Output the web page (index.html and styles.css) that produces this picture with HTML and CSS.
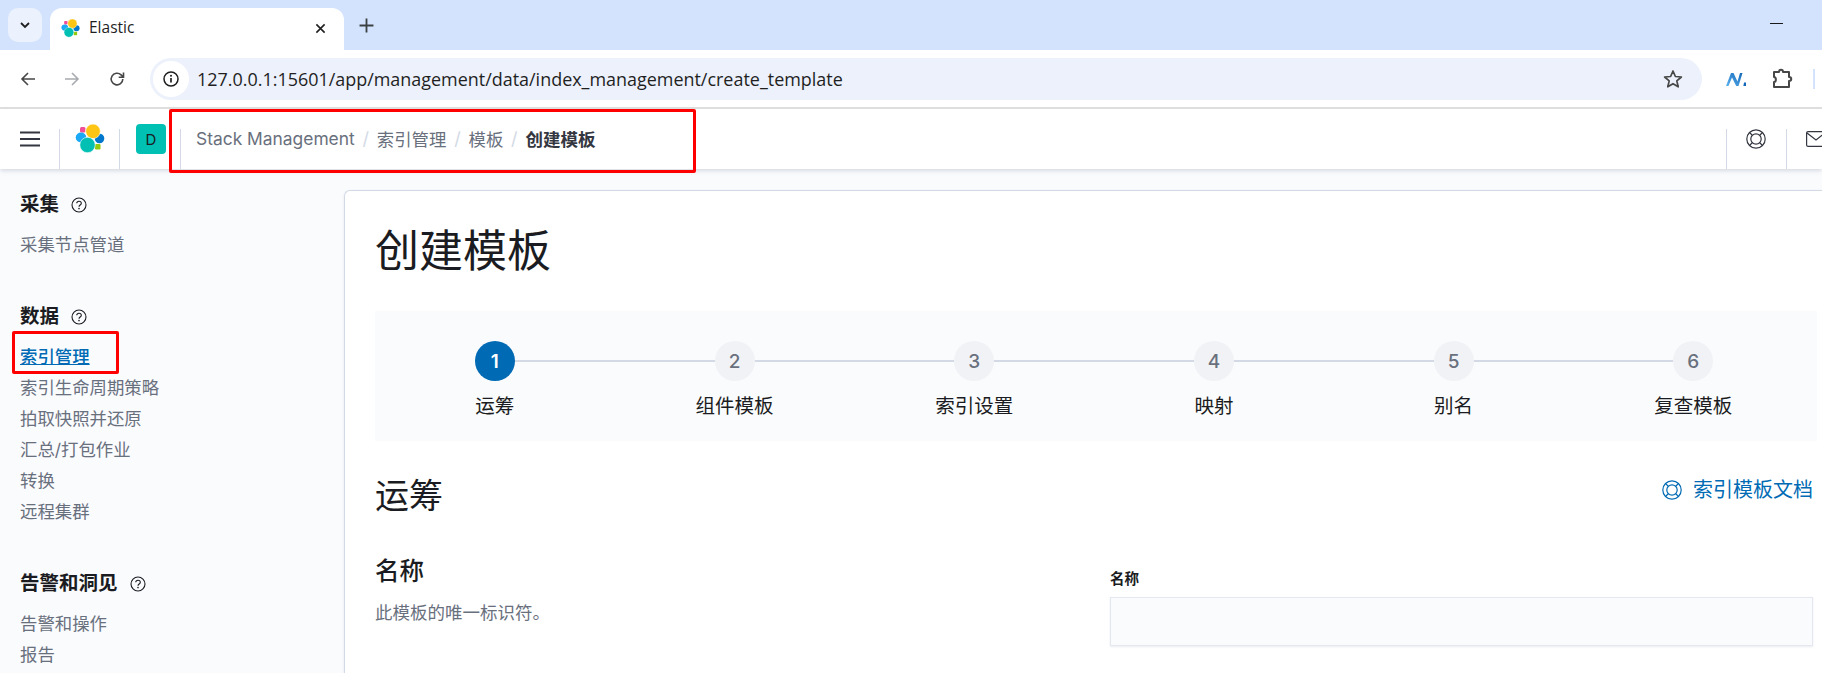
FILE: index.html
```html
<!DOCTYPE html>
<html lang="zh">
<head>
<meta charset="utf-8">
<title>Elastic</title>
<link rel="stylesheet" href="styles.css">
</head>
<body>
<svg class="defs" width="0" height="0" aria-hidden="true">
  <symbol id="elastic" viewBox="0 0 30 30">
    <rect x="5" y="3" width="5.500" height="5.500" rx="1.500" fill="#f04e98"/>
    <ellipse cx="6" cy="13.500" rx="5.300" ry="4.900" fill="#1ba9f5"/>
    <ellipse cx="24.500" cy="14.500" rx="4.800" ry="4.800" fill="#07c"/>
    <rect x="20" y="20" width="5.500" height="5.500" rx="1.200" fill="#93c90e"/>
    <circle cx="18" cy="7.300" r="7.300" fill="#fec514" stroke="#fff" stroke-width=".6"/>
    <circle cx="12.500" cy="21" r="7.700" fill="#00bfb3" stroke="#fff" stroke-width=".6"/>
  </symbol>
  <symbol id="buoy" viewBox="0 0 20 20">
    <g fill="none" stroke="currentColor" stroke-width="1.200">
      <circle cx="10" cy="10" r="9.200"/>
      <circle cx="10" cy="10" r="5.200"/>
      <path d="M3.500 3.500l3 3M16.500 3.500l-3 3M3.500 16.500l3-3M16.500 16.500l-3-3"/>
    </g>
  </symbol>
  <symbol id="help" viewBox="0 0 16 16">
    <circle cx="8" cy="8" r="7" fill="none" stroke="currentColor" stroke-width="1.100"/>
    <path d="M5.700 6.300C5.800 4.900 6.800 4.200 8 4.200c1.300 0 2.300.8 2.300 2 0 1.800-2.300 1.800-2.300 3.600" fill="none" stroke="currentColor" stroke-width="1.100"/>
    <circle cx="8" cy="11.600" r=".8" fill="currentColor"/>
  </symbol>
</svg>

<div class="tabstrip">
  <div class="tab-menu">
    <svg class="ic12" viewBox="0 0 12 12"><path d="M2 4l4 4 4-4" fill="none" stroke="#1f1f1f" stroke-width="1.800"/></svg>
  </div>
  <div class="tab">
    <svg class="tab-logo"><use href="#elastic"/></svg>
    <span class="tab-title">Elastic</span>
    <svg class="tab-close" viewBox="0 0 12 12"><path d="M1.500 1.500l9 9M10.500 1.500l-9 9" stroke="#1f1f1f" stroke-width="1.700"/></svg>
  </div>
  <svg class="tab-new" viewBox="0 0 14 14"><path d="M7 .5v13M.5 7h13" stroke="#3c4043" stroke-width="1.700"/></svg>
  <div class="win-min"></div>
</div>

<div class="toolbar">
  <svg class="nav-ic" viewBox="0 0 16 16"><path d="M15 8H2M8 2L2 8l6 6" fill="none" stroke="#474747" stroke-width="1.600"/></svg>
  <svg class="nav-ic" viewBox="0 0 16 16"><path d="M1 8h13M8 2l6 6-6 6" fill="none" stroke="#a8abb0" stroke-width="1.600"/></svg>
  <svg class="nav-ic" viewBox="0 0 16 16"><path d="M13.800 8a5.800 5.800 0 1 1-1.700-4.100L14 5.800M14.500 1.500v4.800H9.700" fill="none" stroke="#474747" stroke-width="1.600"/></svg>
  <div class="omnibox">
    <span class="site-info">
      <svg viewBox="0 0 16 16" class="site-ic"><circle cx="8" cy="8" r="7" fill="none" stroke="#1f1f1f" stroke-width="1.500"/><path d="M8 7v4.500" stroke="#1f1f1f" stroke-width="1.700"/><circle cx="8" cy="4.800" r="1" fill="#1f1f1f"/></svg>
    </span>
    <span class="url">127.0.0.1:15601/app/management/data/index_management/create_template</span>
    <svg class="star" viewBox="0 0 20 20"><path d="M10 2l2.400 5.500 6 .5-4.600 3.900 1.400 5.900L10 14.700l-5.200 3.100 1.400-5.900L1.600 8l6-.5z" fill="none" stroke="#474747" stroke-width="1.700" stroke-linejoin="round"/></svg>
  </div>
  <svg class="ext-n" viewBox="0 0 22 16">
    <defs><linearGradient id="ng" x1="0" y1="1" x2="1" y2="0"><stop offset="0" stop-color="#5eb4f0"/><stop offset="1" stop-color="#1367b8"/></linearGradient></defs>
    <path d="M1 15L6 2h2.500l4 8.500L15 2h2.500L13.500 15h-2.300L7 6.500 3.500 15z" fill="url(#ng)"/>
    <path d="M19 11.500h2V15h-2.600z" fill="#1367b8"/>
  </svg>
  <svg class="ext-p" viewBox="0 0 22 22"><path d="M3 4h5c0-3 4-3 4 0h6v5c3 0 3 4 0 4v6H3v-5c2.500 0 2.500-5 0-5z" fill="none" stroke="#474747" stroke-width="2" stroke-linejoin="round"/></svg>
  <div class="profile-edge"></div>
</div>

<header class="kbn">
  <div class="kbn-cell cell-menu">
    <svg class="burger" viewBox="0 0 20 16"><path d="M0 1.500h20M0 8h20M0 14.500h20" stroke="#343741" stroke-width="2"/></svg>
  </div>
  <div class="kbn-cell cell-logo"><svg class="kbn-logo"><use href="#elastic"/></svg></div>
  <div class="kbn-cell cell-space"><span class="avatar">D</span></div>
  <nav class="crumbs">
    <span>Stack Management</span><i>/</i><span>索引管理</span><i>/</i><span>模板</span><i>/</i><b>创建模板</b>
  </nav>
  <div class="kbn-cell cell-help"><svg class="buoy"><use href="#buoy"/></svg></div>
  <div class="kbn-cell cell-mail">
    <svg class="mail" viewBox="0 0 20 16"><rect x=".6" y=".6" width="18.800" height="14.800" rx="1.500" fill="none" stroke="#343741" stroke-width="1.200"/><path d="M1 2l9 7 9-7" fill="none" stroke="#343741" stroke-width="1.200"/></svg>
  </div>
</header>

<div class="body">
  <aside class="side">
    <section class="group">
      <h4>采集<svg class="help"><use href="#help"/></svg></h4>
      <a>采集节点管道</a>
    </section>
    <section class="group">
      <h4>数据<svg class="help"><use href="#help"/></svg></h4>
      <a class="active">索引管理</a>
      <a>索引生命周期策略</a>
      <a>拍取快照并还原</a>
      <a>汇总/打包作业</a>
      <a>转换</a>
      <a>远程集群</a>
    </section>
    <section class="group">
      <h4>告警和洞见<svg class="help"><use href="#help"/></svg></h4>
      <a>告警和操作</a>
      <a>报告</a>
    </section>
  </aside>

  <main class="panel">
    <h1>创建模板</h1>
    <div class="steps">
      <div class="step current"><span class="num">1</span><span class="lbl">运筹</span></div>
      <div class="step"><span class="num">2</span><span class="lbl">组件模板</span></div>
      <div class="step"><span class="num">3</span><span class="lbl">索引设置</span></div>
      <div class="step"><span class="num">4</span><span class="lbl">映射</span></div>
      <div class="step"><span class="num">5</span><span class="lbl">别名</span></div>
      <div class="step"><span class="num">6</span><span class="lbl">复查模板</span></div>
    </div>
    <div class="sec-head">
      <h2>运筹</h2>
      <a class="doc"><svg class="doc-ic"><use href="#buoy"/></svg>索引模板文档</a>
    </div>
    <div class="form-row">
      <div class="form-desc">
        <h3>名称</h3>
        <p>此模板的唯一标识符。</p>
      </div>
      <div class="form-field">
        <label>名称</label>
        <div class="input"></div>
      </div>
    </div>
  </main>
</div>

<div class="mark mark-crumbs"></div>
<div class="mark mark-nav"></div>
</body>
</html>
```

FILE: styles.css
```css
* { box-sizing: border-box; }
html, body { margin: 0; height: 673px; overflow: hidden; background: #fff; }
body {
  position: relative;
  font-family: Inter, "Noto Sans CJK SC", sans-serif;
  color: #1a1c21;
}
.defs { position: absolute; }

/* browser chrome */
.tabstrip {
  height: 50px;
  background: #d3e3fd;
  display: flex;
  align-items: flex-end;
  position: relative;
}
.tab-menu {
  width: 34px;
  height: 34px;
  margin: 0 0 8px 8px;
  border-radius: 10px;
  background: #ebf1fd;
  display: flex;
  align-items: center;
  justify-content: center;
}
.ic12 { width: 12px; height: 12px; }
.tab {
  width: 294px;
  height: 42px;
  margin-left: 8px;
  background: #fff;
  border-radius: 12px 12px 0 0;
  display: flex;
  align-items: center;
  padding: 0 18px 2px 11px;
}
.tab-logo { width: 19px; height: 19px; }
.tab-title {
  font-family: "Open Sans", "Noto Sans", sans-serif;
  font-size: 15.500px;
  line-height: 20px;
  color: #1f1f1f;
  margin: 0 0 3px 9px;
  flex: 1;
}
.tab-close { width: 11px; height: 11px; }
.tab-new { width: 15px; height: 15px; margin: 0 0 17px 15px; }
.win-min {
  width: 13px;
  height: 1px;
  background: #1a1a1a;
  margin: 0 39px 26px auto;
}
.toolbar {
  height: 59px;
  background: #fff;
  border-bottom: 2px solid #e0e0e0;
  display: flex;
  align-items: center;
  padding: 0 0 0 20px;
  position: relative;
}
.nav-ic { width: 16px; height: 16px; margin-right: 28px; flex: none; }
.nav-ic:nth-child(3) { margin-left: 1px; margin-right: 25px; }
.omnibox {
  width: 1552px;
  height: 42px;
  border-radius: 21px;
  background: #ecf1fb;
  display: flex;
  align-items: center;
  padding: 0 19px 0 3px;
  flex: none;
}
.site-info {
  width: 36px;
  height: 36px;
  border-radius: 50%;
  background: #fff;
  display: flex;
  align-items: center;
  justify-content: center;
  flex: none;
}
.site-ic { width: 16px; height: 16px; }
.url {
  font-family: "Open Sans", "Noto Sans", sans-serif;
  font-size: 17.950px;
  color: #1f1f1f;
  margin-left: 8px;
  flex: 1;
  white-space: nowrap;
}
.star { width: 20px; height: 20px; flex: none; }
.ext-n { width: 22px; height: 16px; margin-left: 23px; flex: none; }
.ext-p { width: 22px; height: 22px; margin-left: 24px; flex: none; }
.profile-edge {
  width: 2px;
  height: 20px;
  background: #d3e3fd;
  margin-left: 20px;
  flex: none;
}

/* kibana header */
.kbn {
  height: 60px;
  background: #fff;
  display: flex;
  box-shadow: 0 2px 4px rgba(152, 162, 179, .35);
  position: relative;
  z-index: 2;
}
.kbn-cell {
  display: flex;
  justify-content: center;
  position: relative;
  flex: none;
  padding-top: 20px;
}
.kbn-cell::after {
  content: "";
  position: absolute;
  right: 0;
  top: 20px;
  bottom: 0;
  width: 1px;
  background: #d3dae6;
}
.cell-menu { width: 60px; }
.burger { width: 20px; height: 16px; margin-top: 2px; }
.cell-logo { width: 60px; padding-top: 15px; }
.kbn-logo { width: 30px; height: 30px; margin-left: -1px; }
.cell-space { width: 61px; padding-top: 15px; justify-content: flex-start; padding-left: 16px; }
.avatar {
  width: 30px;
  height: 30px;
  border-radius: 4px;
  background: #00bfb3;
  color: #1a1c21;
  font-size: 15px;
  display: flex;
  align-items: center;
  justify-content: center;
}
.crumbs {
  flex: 1;
  display: flex;
  align-items: center;
  height: 60px;
  padding: 0 0 2px 15px;
  font-size: 17.400px;
  color: #69707d;
  white-space: nowrap;
}
.crumbs i {
  font-style: normal;
  color: #d3dae6;
  margin: 0 7.800px;
  font-size: 18px;
}
.crumbs b { color: #343741; font-weight: 600; font-size: 17.500px; }
.cell-help { width: 60px; padding-top: 20px; }
.cell-help::after { left: 0; right: auto; }
.cell-mail { width: 36px; justify-content: flex-start; padding: 22px 0 0 20px; overflow: hidden; }
.cell-mail::after { left: 0; right: auto; }
.buoy { width: 20px; height: 20px; color: #343741; }
.mail { width: 20px; height: 16px; flex: none; }

/* page */
.body { display: flex; height: 504px; background: #fafbfd; }
.side { width: 344px; flex: none; padding: 23px 0 0 20px; }
.group { display: flex; flex-direction: column; align-items: flex-start; margin-bottom: 44px; }
.group h4 {
  margin: 0 0 12px;
  font-size: 19.500px;
  line-height: 25px;
  font-weight: 700;
  display: flex;
  align-items: center;
}
.help { width: 16px; height: 16px; margin-left: 12px; color: #1a1c21; }
.group a {
  font-size: 17.400px;
  line-height: 31px;
  color: #69707d;
}
.group a.active { color: #006bb4; text-decoration: underline; font-weight: 500; }
.panel {
  flex: 1;
  margin-top: 21px;
  background: #fff;
  border: 1px solid #d3dae6;
  border-right: 0;
  border-bottom: 0;
  border-radius: 6px 0 0 0;
  padding: 30px 9px 0 30px;
  box-shadow: 0 1px 3px rgba(152, 162, 179, .2);
}
h1 {
  margin: 0 0 30px;
  font-size: 44px;
  line-height: 60px;
  font-weight: 400;
  color: #1a1c21;
}
.steps {
  display: grid;
  grid-template-columns: repeat(6, 239.700px);
  height: 130px;
  padding-top: 30px;
  background: #fafbfd;
  margin-right: -4px;
}
.step { display: flex; flex-direction: column; align-items: center; position: relative; }
.step:not(:last-child)::after {
  content: "";
  position: absolute;
  left: 50%;
  width: 100%;
  top: 19px;
  height: 2px;
  background: #d3dae6;
}
.num {
  width: 40px;
  height: 40px;
  border-radius: 50%;
  background: #f1f2f5;
  color: #69707d;
  font-size: 19px;
  font-weight: 500;
  display: flex;
  align-items: center;
  justify-content: center;
  position: relative;
  z-index: 1;
}
.current .num { background: #006bb4; color: #fff; font-weight: 600; }
.lbl { font-size: 19.500px; line-height: 28px; margin-top: 11px; color: #1a1c21; }
.sec-head {
  display: flex;
  justify-content: space-between;
  align-items: flex-start;
  margin-top: 32px;
}
h2 { margin: 0; font-size: 34px; line-height: 46px; font-weight: 400; }
.doc {
  display: flex;
  align-items: center;
  font-size: 20px;
  line-height: 28px;
  color: #006bb4;
  margin-top: 3px;
}
.doc-ic { width: 20px; height: 20px; margin-right: 11px; color: #006bb4; }
.form-row { display: flex; margin-top: 35px; }
.form-desc { width: 735px; flex: none; }
h3 { margin: 0; font-size: 24.500px; line-height: 34px; font-weight: 500; }
.form-desc p { margin: 12px 0 0; font-size: 17.500px; line-height: 26px; color: #69707d; }
.form-field { flex: 1; margin-top: 15px; }
.form-field label { display: block; font-size: 14.500px; line-height: 20px; font-weight: 700; color: #1a1c21; }
.input {
  height: 49px;
  margin-top: 8px;
  background: #fafbfd;
  border: 1px solid #e4e7f0;
  box-shadow: 0 1px 2px rgba(152, 162, 179, .2);
}

/* annotations drawn over the screenshot */
.mark { position: absolute; border: 3px solid #f00; border-radius: 2px; z-index: 5; }
.mark-crumbs { left: 169px; top: 109px; width: 527px; height: 64px; }
.mark-nav { left: 12px; top: 331px; width: 107px; height: 43px; }
```
